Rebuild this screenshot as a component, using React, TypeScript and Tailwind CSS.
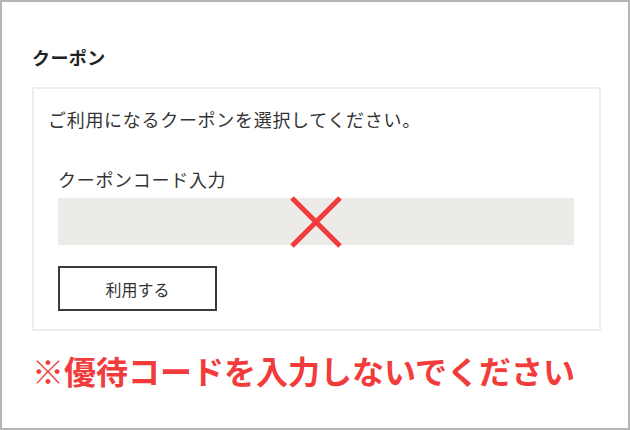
export default function App() {
  return (
    <div
      className="w-[630px] h-[430px] border-2 border-[#b5b5b5] bg-white pl-[30px] pr-[27px] pt-[43px] text-[#333]"
      style={{ fontFamily: '"Noto Sans CJK JP", "Noto Sans", sans-serif' }}
    >
      {/* Title */}
      <h2 className="text-[18px] leading-[24px] font-bold tracking-[0.4px] text-[#222] mb-[18px]">
        クーポン
      </h2>

      {/* Coupon box */}
      <div className="border-2 border-[#efeee9] pl-[14px] pr-[15px] pt-[18px] pb-[18px]">
        <p className="text-[18px] leading-[24px] tracking-[0.7px]">
          ご利用になるクーポンを選択してください。
        </p>

        <div className="pl-[10px] pr-[10px] mt-[36px]">
          <p className="text-[18px] leading-[24px] tracking-[0.7px]">
            クーポンコード入力
          </p>
          <div className="relative mt-[7px] h-[47px] bg-[#edebe7]">
            <svg
              className="absolute left-1/2 top-1/2 -translate-x-1/2 -translate-y-1/2"
              width="54"
              height="52"
              viewBox="0 0 54 52"
            >
              <path
                d="M3 2 L51 50 M51 2 L3 50"
                stroke="#f23b3b"
                strokeWidth="5"
                fill="none"
              />
            </svg>
          </div>
          <button className="mt-[21px] w-[159px] h-[45px] border-2 border-[#3a3a3a] bg-white text-[16px] text-[#333] flex items-center justify-center">
            利用する
          </button>
        </div>
      </div>

      {/* Warning */}
      <p className="mt-[19px] text-[32px] leading-[40px] font-bold text-[#f23b3b]">
        ※優待コードを入力しないでください
      </p>
    </div>
  );
}
